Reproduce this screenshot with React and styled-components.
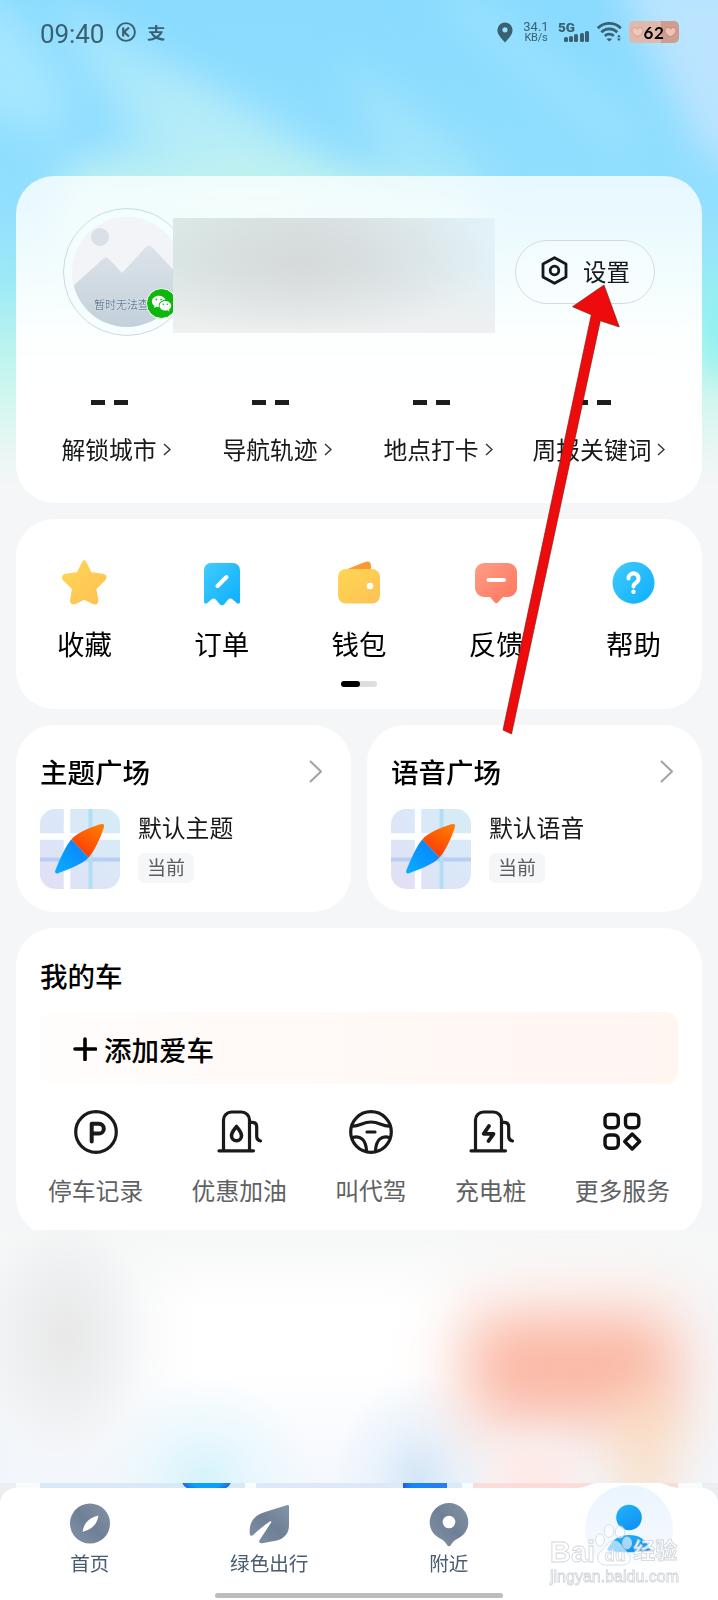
import React from 'react'
import styled, { createGlobalStyle } from 'styled-components'
import { RiWechatFill } from 'react-icons/ri'

const GlobalStyle = createGlobalStyle`
  * {
    box-sizing: border-box;
  }
  body {
    margin: 0;
    background: #f4f6f8;
    font-family: "Noto Sans CJK SC", "Noto Sans", sans-serif;
    color: #16181a;
  }
  svg {
    display: block;
    flex: none;
  }
`

const Page = styled.div`
  position: relative;
  width: 718px;
  height: 1600px;
  overflow: hidden;
  display: flex;
  flex-direction: column;
`
const SkyArt = styled.svg`
  position: absolute;
  top: 0;
  left: 0;
  z-index: -1;
`
const StatusBar = styled.header`
  height: 176px;
  padding: 20px 39px 0 40px;
  display: flex;
  justify-content: space-between;
  align-items: flex-start;
  color: #3a6172;
`
const StatusGroup = styled.div`
  height: 24px;
  display: flex;
  align-items: center;
`
const Clock = styled.span`
  width: 66px;
  margin-right: 10px;
  font-family: Roboto, sans-serif;
  font-size: 26px;
  line-height: 24px;
  padding-top: 3px;
  letter-spacing: -0.1px;
`
const PayMark = styled.span`
  margin-left: 11px;
  font-size: 18.5px;
  line-height: 22px;
  font-weight: 700;
  transform: scaleY(0.85);
`
const Speed = styled.div`
  width: 26px;
  margin: 0 9px 0 10px;
  display: flex;
  flex-direction: column;
  align-items: center;
  font-family: Roboto, sans-serif;
  font-size: 13px;
  line-height: 11px;
  white-space: nowrap;
`
const SpeedUnit = styled.div`
  font-size: 11px;
  letter-spacing: -0.2px;
`
const Signal = styled.div`
  width: 31px;
  height: 22px;
  margin-right: 8px;
  display: flex;
  flex-direction: column;
`
const Network = styled.span`
  height: 9px;
  font-family: Roboto, sans-serif;
  font-size: 13.5px;
  line-height: 13px;
  font-weight: 900;
`
const Bars = styled.div`
  height: 12px;
  margin-left: 6px;
  display: flex;
  align-items: flex-end;
  gap: 1.2px;
`
const Bar = styled.i`
  width: 4px;
  height: ${(p) => p.$h}px;
  border-radius: 1.5px;
  background: #3a6172;
`
const Battery = styled.div`
  width: 50px;
  height: 22px;
  margin-left: 7px;
  border-radius: 5px;
  display: flex;
  align-items: center;
  justify-content: center;
  background: linear-gradient(90deg, #dfb9ab 64%, #cf9d8f 64%);
  color: #000;
  font-family: Lato, sans-serif;
  font-weight: 700;
  font-size: 17px;
  letter-spacing: 0.6px;
`

const Stack = styled.main`
  padding: 0 16px;
  display: flex;
  flex-direction: column;
  gap: 16px;
`
const Card = styled.section`
  border-radius: 38px;
  background: #fff;
`

/* profile */
const ProfileCard = styled(Card)`
  height: 327px;
  padding-top: 32px;
  background: linear-gradient(rgba(255, 255, 255, 0.78), rgba(255, 255, 255, 0.84) 22%, rgba(255, 255, 255, 0.97) 52%, #fff 80%);
`
const ProfileTop = styled.div`
  height: 127px;
  padding-left: 47px;
  display: flex;
  align-items: center;
`
const Avatar = styled.div`
  position: relative;
  width: 128px;
  height: 128px;
  flex: none;
  border: 1px solid #ccd9dc;
  border-radius: 50%;
  display: flex;
  align-items: center;
  justify-content: center;
  background: rgba(244, 253, 255, 0.7);
`
const AvatarNote = styled.span`
  position: absolute;
  left: 30px;
  top: 86px;
  font-size: 11px;
  line-height: 18px;
  color: #5b7894;
  white-space: nowrap;
  text-shadow: 0 0 1px #fff, 0 0 1px #fff;
`
const WechatBadge = styled.span`
  position: absolute;
  left: 82px;
  top: 79px;
  width: 31px;
  height: 31px;
  border: 1.5px solid #fff;
  border-radius: 50%;
  display: flex;
  align-items: center;
  justify-content: center;
  background: #0cb80c;
  color: #fff;
`
const NameMask = styled.div`
  position: relative;
  width: 322px;
  height: 115px;
  margin: 7px 20px 0 -18px;
  flex: none;
  background:
    radial-gradient(ellipse 190px 75px at 40% 38%, rgba(213, 215, 215, 0.8), rgba(220, 222, 222, 0)),
    linear-gradient(rgba(226, 231, 231, 0) 40%, #eff0f0),
    linear-gradient(90deg, #dcebe8, #dae4e5 40%, #dfecf0 75%, #e2f2f8);
`
const SettingsButton = styled.button`
  width: 140px;
  height: 64px;
  padding: 0 0 2px 25px;
  border: 1px solid #d2dcdf;
  border-radius: 32px;
  display: flex;
  align-items: center;
  gap: 15px;
  background: rgba(255, 255, 255, 0.25);
  color: #16181a;
  font-family: inherit;
  font-size: 23.5px;
  font-weight: 400;
  line-height: 30px;
`
const Stats = styled.div`
  margin-top: 65px;
  padding: 0 29px 0 13px;
  display: grid;
  grid-template-columns: repeat(4, 1fr);
`
const Stat = styled.div`
  display: flex;
  flex-direction: column;
  align-items: center;
`
const Dashes = styled.div`
  display: flex;
  gap: 9px;
  &:before,
  &:after {
    content: "";
    width: 14px;
    height: 5px;
    background: #1b1d1e;
  }
`
const StatLabel = styled.div`
  margin-top: 27px;
  margin-right: -13px;
  display: flex;
  align-items: center;
  gap: 6px;
  font-size: 23.8px;
  line-height: 34px;
  white-space: nowrap;
`

/* shortcuts */
const ShortcutCard = styled(Card)`
  height: 190px;
  padding-top: 40px;
  display: flex;
  flex-direction: column;
  align-items: center;
`
const ShortcutRow = styled.div`
  width: 100%;
  display: grid;
  grid-template-columns: repeat(5, 1fr);
`
const Shortcut = styled.div`
  display: flex;
  flex-direction: column;
  align-items: center;
  gap: 16px;
  font-size: 27.5px;
  line-height: 40px;
  color: #000;
`
const Pager = styled.div`
  width: 36px;
  height: 6px;
  margin-top: 18px;
  border-radius: 3px;
  background: #dedede;
  &:before {
    content: "";
    display: block;
    width: 19px;
    height: 6px;
    border-radius: 3px;
    background: #000;
  }
`

/* theme and voice */
const Squares = styled.div`
  display: grid;
  grid-template-columns: 1fr 1fr;
  gap: 16px;
`
const SquareCard = styled(Card)`
  height: 187px;
  padding: 26px 29px 0 24px;
`
const CardHead = styled.div`
  display: flex;
  justify-content: space-between;
  align-items: center;
`
const Title = styled.h2`
  margin: 0;
  font-size: 27.5px;
  line-height: 40px;
  font-weight: 500;
  color: #000;
`
const SquareBody = styled.div`
  margin-top: 18px;
  display: flex;
  gap: 18px;
`
const SquareInfo = styled.div`
  display: flex;
  flex-direction: column;
  align-items: flex-start;
`
const SquareName = styled.span`
  font-size: 23.8px;
  line-height: 35px;
`
const Tag = styled.span`
  margin-top: 9px;
  padding: 0 9px;
  height: 30px;
  border-radius: 7px;
  background: #f4f6f8;
  color: #5b5d5f;
  font-size: 19px;
  line-height: 28px;
`

/* my car, runs on below the fold */
const CarClip = styled.div`
  height: 302px;
  overflow: hidden;
`
const CarCard = styled(Card)`
  height: 308px;
  padding: 27px 24px 0;
`
const AddCar = styled.div`
  height: 72px;
  margin-top: 17px;
  padding: 1px 0 0 33px;
  border-radius: 12px;
  display: flex;
  align-items: center;
  gap: 7px;
  background: linear-gradient(90deg, #fffdfc, #fffaf8 30%, #fff6f2);
  font-size: 27.5px;
  font-weight: 500;
  line-height: 40px;
  color: #000;
`
const Services = styled.div`
  margin-top: 25px;
  padding: 0 8px;
  display: flex;
  justify-content: space-between;
`
const Service = styled.div`
  display: flex;
  flex-direction: column;
  align-items: center;
  gap: 18px;
  font-size: 23.8px;
  line-height: 34px;
  color: #5f6163;
`

const FeedBlur = styled.div`
  height: 253px;
  background:
    radial-gradient(ellipse 110px 160px at 66px 106px, #e8e8e8, rgba(235, 236, 237, 0.75) 38%, rgba(244, 245, 246, 0.25) 75%, rgba(255, 255, 255, 0)),
    radial-gradient(ellipse 110px 105px at 204px 250px, #d6f3fb, rgba(228, 247, 253, 0.6) 50%, rgba(240, 250, 254, 0)),
    radial-gradient(ellipse 85px 105px at 418px 250px, #d3e6f7, rgba(226, 239, 250, 0.6) 50%, rgba(240, 246, 252, 0)),
    linear-gradient(rgba(255, 255, 255, 0) 55%, rgba(242, 246, 253, 0.8)),
    linear-gradient(#f6f7f7, rgba(255, 255, 255, 0) 30%),
    linear-gradient(90deg, #f3f5f7, #fff 28%, #fff 60%, #fbf9f8 90%, #f6f7f9);
  position: relative;
  overflow: hidden;
`
const Glow = styled.i`
  position: absolute;
  left: ${(p) => p.$x}px;
  top: ${(p) => p.$y}px;
  width: ${(p) => p.$w}px;
  height: ${(p) => p.$h}px;
  border-radius: 30px;
  background: ${(p) => p.$c};
  filter: blur(${(p) => p.$blur}px);
`
const FeedStrip = styled.div`
  height: 20px;
  margin-bottom: -15px;
  padding: 0 16px;
  display: flex;
  flex: none;
  background: #eceff2;
`
const StripPart = styled.i`
  width: ${(p) => p.$w}px;
  background: ${(p) => p.$c};
`

/* tab bar */
const TabBar = styled.nav`
  position: relative;
  height: 112px;
  flex: none;
  border-radius: 16px 16px 0 0;
  display: grid;
  grid-template-columns: repeat(4, 1fr);
  background: #fff;
`
const Tab = styled.div`
  padding-top: 15px;
  display: flex;
  flex-direction: column;
  align-items: center;
  font-size: 19.6px;
  line-height: 30px;
  color: #4a5c70;
`
const ActiveTab = styled.div`
  display: flex;
  justify-content: center;
  margin-top: -6px;
`
const HomeIndicator = styled.i`
  position: absolute;
  left: 215px;
  bottom: 2px;
  width: 288px;
  height: 5px;
  border-radius: 3px;
  background: #bdbdbd;
`
const Watermark = styled.div`
  position: absolute;
  left: 550px;
  top: 1522px;
  width: 130px;
  color: rgba(255, 255, 255, 0.85);
  font-family: "Liberation Sans", "Noto Sans CJK SC", sans-serif;
  -webkit-text-stroke: 0.8px rgba(190, 197, 205, 0.75);
`
const WatermarkName = styled.div`
  height: 46px;
  display: flex;
  align-items: flex-end;
  font-size: 29px;
  line-height: 32px;
  font-weight: 700;
`
const WatermarkCn = styled.span`
  font-size: 22px;
  line-height: 34px;
`
const WatermarkUrl = styled.div`
  font-size: 16px;
  line-height: 17px;
  white-space: nowrap;
`
const Paw = styled.svg`
  margin-bottom: 2px;
`
const ArrowArt = styled.svg`
  position: absolute;
  left: 0;
  top: 0;
  pointer-events: none;
`

const Chevron = ({ w, h, color, stroke }) => (
  <svg width={w} height={h} viewBox={`0 0 ${w} ${h}`} fill="none" stroke={color} strokeWidth={stroke}>
    <path d={`M1 1L${w - 1} ${h / 2}L1 ${h - 1}`} />
  </svg>
)

const Sky = () => (
  <SkyArt width="718" height="510" viewBox="0 0 718 510">
    <defs>
      <linearGradient id="sky" x1="0" y1="0" x2="0" y2="1">
        <stop offset="0" stopColor="#8adbff" />
        <stop offset="0.4" stopColor="#92dfff" />
        <stop offset="0.55" stopColor="#9ceaf6" />
        <stop offset="0.7" stopColor="#bff4ee" />
        <stop offset="0.82" stopColor="#dcf7f1" />
        <stop offset="0.95" stopColor="#f4f6f8" />
      </linearGradient>
      <filter id="soft" x="-50%" y="-50%" width="200%" height="200%">
        <feGaussianBlur stdDeviation="18" />
      </filter>
    </defs>
    <rect width="718" height="510" fill="url(#sky)" />
    <g filter="url(#soft)">
      <path d="M-40 0L5 0L70 90L60 140L-60 100Z" fill="#aeeaff" opacity="0.75" />
      <path d="M50 0L90 20L260 110L440 230L40 240L60 165L130 140Z" fill="#b0eafb" opacity="0.8" />
      <path d="M140 85L190 85L280 145L330 215L190 215Z" fill="#b9eef6" opacity="0.7" />
      <path d="M70 168L180 160L250 150L340 165L480 195L480 300L60 300Z" fill="#c3f3ec" opacity="0.7" />
      <path d="M340 50L370 80L500 180L400 200Z" fill="#aae8fa" opacity="0.7" />
      <path d="M420 -10L480 0L640 130L620 150Z" fill="#9fe3ff" opacity="0.8" />
      <path d="M610 -30L770 -30L770 190L700 150Z" fill="#c6e6ff" opacity="0.8" />
      <rect x="704" y="290" width="60" height="80" fill="#7ff0f0" opacity="0.8" />
    </g>
  </SkyArt>
)

const ParkingIcon = () => (
  <svg width="46" height="46" viewBox="0 0 46 46" fill="none" stroke="#1a1a1a" strokeWidth="3.2">
    <circle cx="23" cy="23" r="20.3" />
    <path d="M18.7 32.500V14.8h7.200a4.900 4.900 0 0 1 0 9.800H18.7" strokeWidth="4" strokeLinecap="round" strokeLinejoin="round" />
  </svg>
)
const PumpIcon = ({ children }) => (
  <svg width="46" height="46" viewBox="0 0 46 46" fill="none" stroke="#1a1a1a" strokeWidth="3.2" strokeLinecap="round" strokeLinejoin="round">
    <path d="M7.500 41V11a8 8 0 0 1 8-8h10a8 8 0 0 1 8 8V41M3 41.800H37.500" />
    <path d="M33.500 13.300h2.600c3 0 4.600 1.800 4.600 4.500v9.500c0 3 0.900 4.300 3.800 4.700" />
    {children}
  </svg>
)
const WheelIcon = () => (
  <svg width="46" height="46" viewBox="0 0 46 46" fill="none" stroke="#1a1a1a" strokeWidth="3.2" strokeLinecap="round">
    <circle cx="23" cy="23" r="20.300" />
    <path d="M4.500 17c7 0.500 10-4 18.500-4s11.500 4.500 18.500 4M19 23h8M4.500 28.500c8-2.800 13.500 3 14 13M41.500 28.500c-8-2.800-13.500 3-14 13" />
  </svg>
)
const MoreIcon = () => (
  <svg width="46" height="46" viewBox="0 0 46 46" fill="none" stroke="#111" strokeWidth="3.400" strokeLinejoin="round">
    <rect x="6" y="5.500" width="13.300" height="13.300" rx="4" />
    <rect x="26.500" y="5.500" width="13.300" height="13.300" rx="4" />
    <rect x="6" y="26" width="13.300" height="13.300" rx="4" />
    <path d="M33.200 25l7.500 7.500l-7.500 7.500l-7.500-7.500z" />
  </svg>
)

const shortcuts = [
  {
    label: '收藏',
    icon: (
      <path
        d="M24 5l5.500 11.500L41.500 18.200Q44.500 19 42.500 21.500L33.500 30.500L35.500 42.500Q35.500 45 33 44L24 39.500L15 44Q12.500 45 12.500 42.500L14.500 30.500L5.500 21.500Q3.500 19 6.500 18.200L18.500 16.500z"
        transform="translate(-2 -1.800) scale(1.050 1.020)"
        fill="url(#gold)"
        stroke="url(#gold)"
        strokeWidth="4"
        strokeLinejoin="round"
      />
    ),
  },
  {
    label: '订单',
    icon: (
      <>
        <path d="M13 4h22a7 7 0 0 1 7 7v32c0 1.500-2 2.300-3.300 1l-4-3.600c-1.500-1.200-3-1.200-4.500 0l-3.900 4.800a3 3 0 0 1-4.600 0l-3.900-4.800c-1.500-1.200-3-1.200-4.500 0l-4 3.600C8.300 45.300 6 44.500 6 43V11a7 7 0 0 1 7-7z" fill="url(#blue)" />
        <path d="M19.500 27l9-9" stroke="#fff" strokeWidth="4" strokeLinecap="round" />
      </>
    ),
  },
  {
    label: '钱包',
    icon: (
      <>
        <path d="M10 11L30 3c4-1.600 6 0 6 4v8z" fill="#fb9a2e" />
        <rect x="3" y="10" width="42" height="34.500" rx="8" fill="url(#gold)" />
        <circle cx="35" cy="27" r="3.300" fill="#fff" />
      </>
    ),
  },
  {
    label: '反馈',
    icon: (
      <>
        <path d="M12 4h24a9 9 0 0 1 9 9v16a9 9 0 0 1-9 9h-5l-5 5.300a2.300 2.300 0 0 1-3.500 0L18 38h-6a9 9 0 0 1-9-9V13a9 9 0 0 1 9-9z" fill="url(#coral)" />
        <path d="M16.500 21h15.500" stroke="#fff" strokeWidth="4" strokeLinecap="round" />
      </>
    ),
  },
  {
    label: '帮助',
    icon: (
      <>
        <circle cx="24.500" cy="23.700" r="21" fill="url(#blue)" />
        <path d="M19.500 19.500a5 5 0 1 1 7.600 4.200c-1.800 1.100-2.600 2-2.600 3.800" fill="none" stroke="#fff" strokeWidth="4" strokeLinecap="round" />
        <circle cx="24.500" cy="32.700" r="2.200" fill="#fff" />
      </>
    ),
  },
]

const services = [
  { label: '停车记录', icon: <ParkingIcon /> },
  {
    label: '优惠加油',
    icon: (
      <PumpIcon>
        <path d="M20.500 17.500c3 4 5 6 5 9.300a5 5 0 0 1-10 0c0-3.300 2-5.300 5-9.300z" strokeWidth="3.600" />
      </PumpIcon>
    ),
  },
  { label: '叫代驾', icon: <WheelIcon /> },
  {
    label: '充电桩',
    icon: (
      <PumpIcon>
        <path d="M21 17l-5.300 7.800H25.500L20.500 32" strokeWidth="3.800" />
      </PumpIcon>
    ),
  },
  { label: '更多服务', icon: <MoreIcon /> },
]

const stats = ['解锁城市', '导航轨迹', '地点打卡', '周报关键词']

const Gradients = () => (
  <defs>
    <linearGradient id="gold" x1="0" y1="0" x2="1" y2="1">
      <stop offset="0" stopColor="#ffd654" />
      <stop offset="1" stopColor="#fec154" />
    </linearGradient>
    <linearGradient id="blue" x1="0" y1="0" x2="1" y2="1">
      <stop offset="0" stopColor="#41cbfd" />
      <stop offset="1" stopColor="#0daffb" />
    </linearGradient>
    <linearGradient id="coral" x1="0" y1="0" x2="1" y2="1">
      <stop offset="0" stopColor="#ff9e88" />
      <stop offset="1" stopColor="#ff7359" />
    </linearGradient>
    <linearGradient id="slate" x1="1" y1="0" x2="0" y2="1">
      <stop offset="0" stopColor="#8594a5" />
      <stop offset="0.5" stopColor="#6e8097" />
      <stop offset="1" stopColor="#8391a4" />
    </linearGradient>
  </defs>
)

const MapThumb = () => (
  <svg width="80" height="80" viewBox="0 0 80 80">
    <defs>
      <linearGradient id="tile" x1="0" y1="1" x2="1" y2="0">
        <stop offset="0" stopColor="#e4def5" />
        <stop offset="0.5" stopColor="#dbe7f8" />
        <stop offset="1" stopColor="#d5edf6" />
      </linearGradient>
      <linearGradient id="needleRed" x1="1" y1="0" x2="0.400" y2="1">
        <stop offset="0" stopColor="#ff8200" />
        <stop offset="1" stopColor="#fc3b08" />
      </linearGradient>
      <linearGradient id="needleBlue" x1="0" y1="1" x2="1" y2="0">
        <stop offset="0" stopColor="#08b0ff" />
        <stop offset="1" stopColor="#0a7cfb" />
      </linearGradient>
      <clipPath id="thumbClip">
        <rect width="80" height="80" rx="15" />
      </clipPath>
    </defs>
    <g clipPath="url(#thumbClip)">
      <rect width="80" height="80" fill="url(#tile)" />
      <path d="M0 27.500h80M27 0v80" stroke="#fff" strokeWidth="6.500" />
      <path d="M0 50.500h80" stroke="#b9cdf7" strokeWidth="4" />
      <path d="M50.500 0v80" stroke="#b0def5" strokeWidth="4" />
    </g>
    <path d="M31.300 30.500C36 25 47 19.500 61 15.100c2.400-.7 3.800.6 3 2.900C60.500 29 54 43 48.500 48.500z" fill="url(#needleRed)" />
    <path d="M31.300 30.500C26 36 20 50 15.300 61.500c-.8 2.300.6 3.400 2.700 2.700C30 60 43 54.500 48.500 48.500z" fill="url(#needleBlue)" />
  </svg>
)

const Square = ({ title, name }) => (
  <SquareCard>
    <CardHead>
      <Title>{title}</Title>
      <Chevron w={13} h={23} color="#a3a3a3" stroke={2} />
    </CardHead>
    <SquareBody>
      <MapThumb />
      <SquareInfo>
        <SquareName>{name}</SquareName>
        <Tag>当前</Tag>
      </SquareInfo>
    </SquareBody>
  </SquareCard>
)

const Status = () => (
  <StatusBar>
    <StatusGroup>
      <Clock>09:40</Clock>
      <svg width="20" height="20" viewBox="0 0 20 20" fill="none" stroke="#3a6172" strokeWidth="1.900">
        <circle cx="10" cy="10" r="8.900" />
        <path d="M7.200 5.500v9M13 5.500l-4.800 4.500 4.800 4.500" strokeWidth="2.200" />
      </svg>
      <PayMark>支</PayMark>
    </StatusGroup>
    <StatusGroup>
      <svg width="16" height="21" viewBox="0 0 16 21">
        <path d="M8 0.500a7.600 7.600 0 0 0-7.600 7.600C0.400 13 4.500 16.500 8 20.500c3.500-4 7.600-7.500 7.600-12.400A7.600 7.600 0 0 0 8 0.500zM8 5.200a2.600 2.600 0 1 1 0 5.200 2.600 2.600 0 0 1 0-5.200z" fill="#3a6172" />
      </svg>
      <Speed>
        34.1
        <SpeedUnit>KB/s</SpeedUnit>
      </Speed>
      <Signal>
        <Network>5G</Network>
        <Bars>
          {[5, 6.500, 8, 9.500, 11.500].map((h) => (
            <Bar key={h} $h={h} />
          ))}
        </Bars>
      </Signal>
      <svg width="25" height="20" viewBox="0 0 25 20" fill="none" stroke="#3a6172" strokeWidth="2.700">
        <path d="M0.800 6.200a16 16 0 0 1 23 0M4.300 10.300a11 11 0 0 1 16 0M7.800 14a6.500 6.500 0 0 1 9 0" />
        <path d="M9.500 17q2.800-1.600 5.600 0l-2.800 2.600z" fill="#3a6172" stroke="none" />
        <path d="M20 15.200l1.900-2.800 1.900 2.800zM20 16.500l1.900 2.800 1.900-2.800z" fill="#3a6172" stroke="none" />
      </svg>
      <Battery>
        <svg width="13" height="12" viewBox="0 0 12 11" fill="#efc7bc" stroke="#c98b7e" strokeWidth="0.600">
          <path d="M6 10C2 8 0.500 5.500 1 3.500 1.600 1 5 0.500 6 3c1-2.500 4.400-2 5 0.500C11.500 5.500 10 8 6 10z" />
        </svg>
        62
        <svg width="13" height="12" viewBox="0 0 12 11" fill="#efc0b6" stroke="#b5766a" strokeWidth="0.600">
          <path d="M6 10C2 8 0.500 5.500 1 3.500 1.600 1 5 0.500 6 3c1-2.500 4.400-2 5 0.500C11.500 5.500 10 8 6 10z" />
        </svg>
      </Battery>
    </StatusGroup>
  </StatusBar>
)

const Profile = () => (
  <ProfileCard>
    <ProfileTop>
      <Avatar>
        <svg width="110" height="110" viewBox="0 0 110 110">
          <defs>
            <linearGradient id="hill" x1="0" y1="0" x2="0" y2="1">
              <stop offset="0" stopColor="#dde3ea" />
              <stop offset="1" stopColor="#c3d0da" />
            </linearGradient>
            <clipPath id="face">
              <circle cx="55" cy="55" r="55" />
            </clipPath>
          </defs>
          <g clipPath="url(#face)">
            <rect width="110" height="110" fill="#f2f4f8" />
            <circle cx="28" cy="20" r="9" fill="#d9e0e8" />
            <path d="M0 70L31 42q3-3 6 0L50 56 74 30q3-3 6 0L110 62V110H0z" fill="url(#hill)" />
          </g>
        </svg>
        <AvatarNote>暂时无法查看</AvatarNote>
        <WechatBadge>
          <RiWechatFill size={21} />
        </WechatBadge>
      </Avatar>
      <NameMask />
      <SettingsButton>
        <svg width="27" height="29" viewBox="0 0 27 29" fill="none" stroke="#16181a" strokeWidth="2.800" strokeLinejoin="round">
          <path d="M13.500 1.700L25 8v13L13.500 27.300 2 21V8z" />
          <circle cx="13.500" cy="14.500" r="4.300" />
        </svg>
        设置
      </SettingsButton>
    </ProfileTop>
    <Stats>
      {stats.map((label) => (
        <Stat key={label}>
          <Dashes />
          <StatLabel>
            {label}
            <Chevron w={8} h={13} color="#33373a" stroke={1.5} />
          </StatLabel>
        </Stat>
      ))}
    </Stats>
  </ProfileCard>
)

const Tabs = () => (
  <TabBar>
    <Tab>
      <svg width="40" height="45" viewBox="0 0 40 45">
        <circle cx="20" cy="20.500" r="20" fill="url(#slate)" />
        <path d="M28.500 12.500c-1 5-2.500 8.500-6 11.500-3 2.500-6.500 4-10 4.800 1-5 2.500-8.500 6-11.500 3-2.500 6.500-4 10-4.800z" fill="#fff" />
      </svg>
      首页
    </Tab>
    <Tab>
      <svg width="40" height="45" viewBox="0 0 40 45">
        <path d="M38.500 2C40 1.800 40.200 3 40 4.500V22c0 8-4 13-12 15.500L13 40.200c-2 .5-3.500-1.200-2.500-3L22 19.800c.8-1.200 0-2-1.200-1.200C15 22.500 9 27.500 4.500 31.700 2.500 33.500 0.800 32.500 0.700 30.500 0 18 6 12 16 9z" fill="url(#slate)" />
      </svg>
      绿色出行
    </Tab>
    <Tab>
      <svg width="40" height="45" viewBox="0 0 40 45">
        <path d="M20 0A19.300 19.300 0 0 0 0.700 19.300C0.700 28 6 33 12 36c3 1.500 4 2.800 6.500 6.500q1.500 1.500 3 0C24 38.800 25 37.500 28 36c6-3 11.300-8 11.300-16.700A19.300 19.300 0 0 0 20 0z" fill="url(#slate)" />
        <circle cx="20" cy="19" r="6.300" fill="#fff" />
      </svg>
      附近
    </Tab>
    <ActiveTab>
      <svg width="104" height="106" viewBox="0 0 104 106">
        <defs>
          <linearGradient id="halo" x1="0" y1="0" x2="0" y2="1">
            <stop offset="0" stopColor="#ebf5fe" />
            <stop offset="0.600" stopColor="#f2f8fe" />
            <stop offset="1" stopColor="#fff" />
          </linearGradient>
          <linearGradient id="me" x1="0" y1="0" x2="0.600" y2="1">
            <stop offset="0" stopColor="#22b4fa" />
            <stop offset="1" stopColor="#1193f5" />
          </linearGradient>
        </defs>
        <path d="M0 6C10 6 14 1 22 1H82C90 1 94 6 104 6V20H0z" fill="#fff" />
        <circle cx="53" cy="47" r="44" fill="url(#halo)" />
        <circle cx="53" cy="35.500" r="12.800" fill="url(#me)" />
        <path d="M31 68C36 57 43 53 53 53s17 4 22 15c-8 3-36 3-44 0z" fill="url(#me)" />
      </svg>
    </ActiveTab>
    <HomeIndicator />
  </TabBar>
)

const App = () => {
  return (
    <Page>
      <GlobalStyle />
      <Sky />
      <Status />
      <Stack>
        <Profile />
        <ShortcutCard>
          <ShortcutRow>
            {shortcuts.map(({ label, icon }) => (
              <Shortcut key={label}>
                <svg width="48" height="48" viewBox="0 0 48 48">
                  <Gradients />
                  {icon}
                </svg>
                {label}
              </Shortcut>
            ))}
          </ShortcutRow>
          <Pager />
        </ShortcutCard>
        <Squares>
          <Square title="主题广场" name="默认主题" />
          <Square title="语音广场" name="默认语音" />
        </Squares>
        <CarClip>
          <CarCard>
            <Title>我的车</Title>
            <AddCar>
              <svg width="24" height="24" viewBox="0 0 24 24" stroke="#000" strokeWidth="3.600" strokeLinecap="round">
                <path d="M12 2v20.500M2 12h20.500" />
              </svg>
              添加爱车
            </AddCar>
            <Services>
              {services.map(({ label, icon }) => (
                <Service key={label}>
                  {icon}
                  {label}
                </Service>
              ))}
            </Services>
          </CarCard>
        </CarClip>
      </Stack>
      <FeedBlur>
        <Glow $x={448} $y={65} $w={245} $h={150} $c="rgba(251, 222, 214, 0.6)" $blur={30} />
        <Glow $x={475} $y={90} $w={195} $h={95} $c="rgba(250, 172, 150, 0.8)" $blur={27} />
        <Glow $x={615} $y={155} $w={60} $h={130} $c="rgba(249, 216, 184, 0.7)" $blur={24} />
        <Glow $x={490} $y={215} $w={90} $h={60} $c="#fdeae7" $blur={16} />
      </FeedBlur>
      <FeedStrip>
        <StripPart $w={24} $c="#fafbfc" />
        <StripPart $w={142} $c="#d8e9f7" />
        <StripPart $w={49} $c="radial-gradient(ellipse 25px 12px at 50% -2px, #0aa2f8 60%, #1b6fe8 96%, #d8e9f7)" />
        <StripPart $w={14} $c="#d8e9f7" />
        <StripPart $w={11} $c="#fafbfc" />
        <StripPart $w={147} $c="#dde9f7" />
        <StripPart $w={44} $c="linear-gradient(90deg, #1a5fe0, #1487fa 20%, #2b7bf0)" />
        <StripPart $w={15} $c="#dde9f7" />
        <StripPart $w={11} $c="#fafbfc" />
        <StripPart $w={205} $c="#fadcd9" />
        <StripPart $w={24} $c="#fafbfc" />
      </FeedStrip>
      <Tabs />
      <Watermark>
        <WatermarkName>
          Bai
          <Paw width="38" height="42" viewBox="0 0 38 42" fill="rgba(255,255,255,0.6)" stroke="#d3d8de" strokeWidth="0.800">
            <ellipse cx="5" cy="16" rx="4.500" ry="6" />
            <ellipse cx="14" cy="7" rx="4.800" ry="6.500" />
            <ellipse cx="25" cy="8" rx="4.800" ry="6" />
            <ellipse cx="32" cy="19" rx="4.500" ry="6" />
            <path d="M19 17c-6 0-8 5-12 9S1 34 4 38s9 3 15 3 12 1 15-3-0-8-4-12-5-9-11-9z" />
            <text x="9.500" y="37" fontSize="17">du</text>
          </Paw>
          <WatermarkCn>经验</WatermarkCn>
        </WatermarkName>
        <WatermarkUrl>jingyan.baidu.com</WatermarkUrl>
      </Watermark>
      <ArrowArt width="718" height="760" viewBox="0 0 718 760">
        <path d="M604 285L619.300 327L600.300 320.700L511.500 734L503 730L591.300 314.700L572.500 306.700z" fill="#ee0b0b" stroke="#8c1a1a" strokeWidth="0.700" />
      </ArrowArt>
    </Page>
  )
}

export default App
